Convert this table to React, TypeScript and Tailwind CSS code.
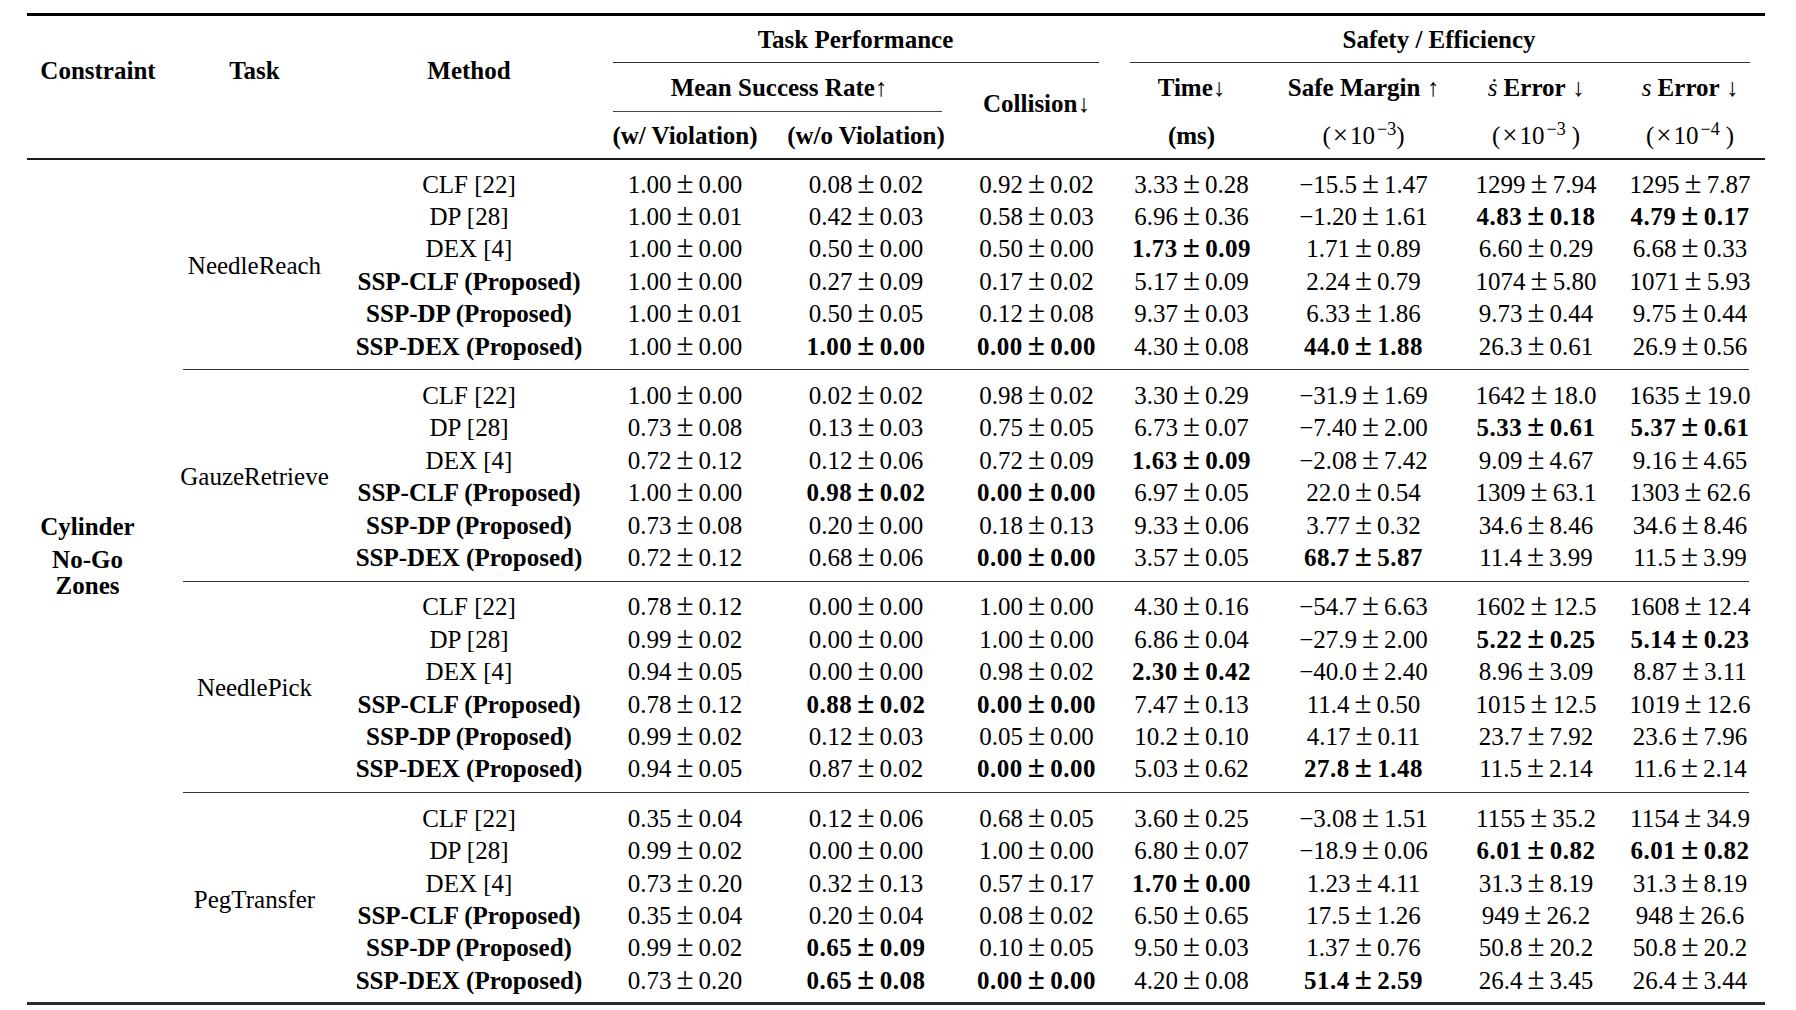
import { Fragment } from 'react';

type Row = { method: string; proposed?: boolean; vals: string[] };
type Group = { task: string; rows: Row[] };

// values prefixed with * are bold (best in column)
const groups: Group[] = [
  {
    task: 'NeedleReach',
    rows: [
      { method: 'CLF [22]', vals: ['1.00±0.00', '0.08±0.02', '0.92±0.02', '3.33±0.28', '−15.5±1.47', '1299±7.94', '1295±7.87'] },
      { method: 'DP [28]', vals: ['1.00±0.01', '0.42±0.03', '0.58±0.03', '6.96±0.36', '−1.20±1.61', '*4.83±0.18', '*4.79±0.17'] },
      { method: 'DEX [4]', vals: ['1.00±0.00', '0.50±0.00', '0.50±0.00', '*1.73±0.09', '1.71±0.89', '6.60±0.29', '6.68±0.33'] },
      { method: 'SSP-CLF (Proposed)', proposed: true, vals: ['1.00±0.00', '0.27±0.09', '0.17±0.02', '5.17±0.09', '2.24±0.79', '1074±5.80', '1071±5.93'] },
      { method: 'SSP-DP (Proposed)', proposed: true, vals: ['1.00±0.01', '0.50±0.05', '0.12±0.08', '9.37±0.03', '6.33±1.86', '9.73±0.44', '9.75±0.44'] },
      { method: 'SSP-DEX (Proposed)', proposed: true, vals: ['1.00±0.00', '*1.00±0.00', '*0.00±0.00', '4.30±0.08', '*44.0±1.88', '26.3±0.61', '26.9±0.56'] },
    ],
  },
  {
    task: 'GauzeRetrieve',
    rows: [
      { method: 'CLF [22]', vals: ['1.00±0.00', '0.02±0.02', '0.98±0.02', '3.30±0.29', '−31.9±1.69', '1642±18.0', '1635±19.0'] },
      { method: 'DP [28]', vals: ['0.73±0.08', '0.13±0.03', '0.75±0.05', '6.73±0.07', '−7.40±2.00', '*5.33±0.61', '*5.37±0.61'] },
      { method: 'DEX [4]', vals: ['0.72±0.12', '0.12±0.06', '0.72±0.09', '*1.63±0.09', '−2.08±7.42', '9.09±4.67', '9.16±4.65'] },
      { method: 'SSP-CLF (Proposed)', proposed: true, vals: ['1.00±0.00', '*0.98±0.02', '*0.00±0.00', '6.97±0.05', '22.0±0.54', '1309±63.1', '1303±62.6'] },
      { method: 'SSP-DP (Proposed)', proposed: true, vals: ['0.73±0.08', '0.20±0.00', '0.18±0.13', '9.33±0.06', '3.77±0.32', '34.6±8.46', '34.6±8.46'] },
      { method: 'SSP-DEX (Proposed)', proposed: true, vals: ['0.72±0.12', '0.68±0.06', '*0.00±0.00', '3.57±0.05', '*68.7±5.87', '11.4±3.99', '11.5±3.99'] },
    ],
  },
  {
    task: 'NeedlePick',
    rows: [
      { method: 'CLF [22]', vals: ['0.78±0.12', '0.00±0.00', '1.00±0.00', '4.30±0.16', '−54.7±6.63', '1602±12.5', '1608±12.4'] },
      { method: 'DP [28]', vals: ['0.99±0.02', '0.00±0.00', '1.00±0.00', '6.86±0.04', '−27.9±2.00', '*5.22±0.25', '*5.14±0.23'] },
      { method: 'DEX [4]', vals: ['0.94±0.05', '0.00±0.00', '0.98±0.02', '*2.30±0.42', '−40.0±2.40', '8.96±3.09', '8.87±3.11'] },
      { method: 'SSP-CLF (Proposed)', proposed: true, vals: ['0.78±0.12', '*0.88±0.02', '*0.00±0.00', '7.47±0.13', '11.4±0.50', '1015±12.5', '1019±12.6'] },
      { method: 'SSP-DP (Proposed)', proposed: true, vals: ['0.99±0.02', '0.12±0.03', '0.05±0.00', '10.2±0.10', '4.17±0.11', '23.7±7.92', '23.6±7.96'] },
      { method: 'SSP-DEX (Proposed)', proposed: true, vals: ['0.94±0.05', '0.87±0.02', '*0.00±0.00', '5.03±0.62', '*27.8±1.48', '11.5±2.14', '11.6±2.14'] },
    ],
  },
  {
    task: 'PegTransfer',
    rows: [
      { method: 'CLF [22]', vals: ['0.35±0.04', '0.12±0.06', '0.68±0.05', '3.60±0.25', '−3.08±1.51', '1155±35.2', '1154±34.9'] },
      { method: 'DP [28]', vals: ['0.99±0.02', '0.00±0.00', '1.00±0.00', '6.80±0.07', '−18.9±0.06', '*6.01±0.82', '*6.01±0.82'] },
      { method: 'DEX [4]', vals: ['0.73±0.20', '0.32±0.13', '0.57±0.17', '*1.70±0.00', '1.23±4.11', '31.3±8.19', '31.3±8.19'] },
      { method: 'SSP-CLF (Proposed)', proposed: true, vals: ['0.35±0.04', '0.20±0.04', '0.08±0.02', '6.50±0.65', '17.5±1.26', '949±26.2', '948±26.6'] },
      { method: 'SSP-DP (Proposed)', proposed: true, vals: ['0.99±0.02', '*0.65±0.09', '0.10±0.05', '9.50±0.03', '1.37±0.76', '50.8±20.2', '50.8±20.2'] },
      { method: 'SSP-DEX (Proposed)', proposed: true, vals: ['0.73±0.20', '*0.65±0.08', '*0.00±0.00', '4.20±0.08', '*51.4±2.59', '26.4±3.45', '26.4±3.44'] },
    ],
  },
];

function Num({ v }: { v: string }) {
  const bold = v.startsWith('*');
  const [a, b] = (bold ? v.slice(1) : v).split('±');
  return (
    <span className={bold ? 'font-bold tracking-[0.5px]' : ''}>
      {a}
      <span className="mx-[5px] text-[31px] leading-[0]">±</span>
      {b}
    </span>
  );
}

function Scale({ exp, gap }: { exp: string; gap?: boolean }) {
  return (
    <span>
      (<span className="mx-[2px] text-[27px] leading-[0]">×</span>10
      <span className="relative -top-[9px] ml-[2px] text-[18px]">{exp}</span>
      {gap ? <span className="ml-[6px]">)</span> : ')'}
    </span>
  );
}

export default function App() {
  return (
    <div className="min-h-screen bg-white pt-[13px] pl-[27px] font-['Liberation_Serif',serif] text-[25px] leading-none text-black">
      <table className="table-fixed border-collapse w-[1738px] whitespace-nowrap">
        <colgroup>
          <col className="w-[142px]" />
          <col className="w-[171px]" />
          <col className="w-[258px]" />
          <col className="w-[174px]" />
          <col className="w-[188px]" />
          <col className="w-[153px]" />
          <col className="w-[157px]" />
          <col className="w-[187px]" />
          <col className="w-[158px]" />
          <col className="w-[150px]" />
        </colgroup>
        <tbody>
          <tr>
            <td colSpan={10} className="p-0 h-[3px] bg-black" />
          </tr>

          <tr>
            <td rowSpan={3} className="p-0 align-top text-center font-bold">
              <div className="pt-[40px] leading-[30px]">Constraint</div>
            </td>
            <td rowSpan={3} className="p-0 align-top text-center font-bold">
              <div className="pt-[40px] leading-[30px]">Task</div>
            </td>
            <td rowSpan={3} className="p-0 align-top text-center font-bold">
              <div className="pt-[40px] leading-[30px]">Method</div>
            </td>
            <td colSpan={3} className="p-0 h-[47px]">
              <div className="flex h-[47px] flex-col">
                <div className="flex flex-1 items-center justify-center font-bold">Task Performance</div>
                <div className="ml-[15px] mr-[14px] h-px bg-[#333]" />
              </div>
            </td>
            <td colSpan={4} className="p-0 h-[47px]">
              <div className="flex h-[47px] flex-col">
                <div className="flex flex-1 items-center justify-center font-bold">Safety / Efficiency</div>
                <div className="ml-[17px] mr-[15px] h-px bg-[#333]" />
              </div>
            </td>
          </tr>

          <tr>
            <td colSpan={2} className="p-0 h-[49px]">
              <div className="flex h-[49px] flex-col">
                <div className="flex flex-1 items-center justify-center font-bold">Mean Success Rate↑</div>
                <div className="ml-[15px] mr-[18px] h-px bg-[#444]" />
              </div>
            </td>
            <td rowSpan={2} className="p-0 align-middle text-center font-bold">
              <div className="pb-[14px]">
                Collision<span className="font-normal">↓</span>
              </div>
            </td>
            <td className="p-0 text-center font-bold">
              Time<span className="font-normal">↓</span>
            </td>
            <td className="p-0 text-center font-bold">
              Safe Margin <span className="font-normal">↑</span>
            </td>
            <td className="p-0 text-center">
              <span className="italic">ṡ</span> <span className="font-bold">Error</span> ↓
            </td>
            <td className="p-0 text-center">
              <span className="italic">s</span> <span className="font-bold">Error</span> ↓
            </td>
          </tr>

          <tr>
            <td className="p-0 h-[46px] text-center font-bold">(w/ Violation)</td>
            <td className="p-0 text-center font-bold">(w/o Violation)</td>
            <td className="p-0 text-center font-bold">(ms)</td>
            <td className="p-0 text-center">
              <Scale exp="−3" />
            </td>
            <td className="p-0 text-center">
              <Scale exp="−3" gap />
            </td>
            <td className="p-0 text-center">
              <Scale exp="−4" gap />
            </td>
          </tr>

          <tr>
            <td colSpan={10} className="p-0 h-[2px] bg-[#1a1a1a]" />
          </tr>
          <tr>
            <td colSpan={10} className="p-0 h-[8px]" />
          </tr>

          {groups.map((g, gi) => (
            <Fragment key={g.task}>
              {g.rows.map((r, ri) => (
                <tr key={r.method}>
                  {gi === 0 && ri === 0 && (
                    <td rowSpan={27} className="p-0 align-middle font-bold">
                      <div className="flex flex-col items-center pr-[21px] pb-[52px]">
                        <div className="h-[30px] leading-[30px]">Cylinder</div>
                        <div className="mt-[3px] h-[30px] leading-[30px]">No-Go</div>
                        <div className="-mt-[4px] h-[30px] leading-[30px]">Zones</div>
                      </div>
                    </td>
                  )}
                  {ri === 0 && (
                    <td rowSpan={6} className="p-0 align-middle text-center">
                      {g.task}
                    </td>
                  )}
                  <td className={`p-0 h-[32.4px] text-center ${r.proposed ? 'font-bold' : ''}`}>{r.method}</td>
                  {r.vals.map((v, vi) => (
                    <td key={vi} className="p-0 text-center">
                      <Num v={v} />
                    </td>
                  ))}
                </tr>
              ))}
              {gi < groups.length - 1 && (
                <tr>
                  <td colSpan={9} className="p-0 h-[17px] align-top">
                    <div className="mt-[7px] ml-[14px] mr-[16px] h-px bg-[#333]" />
                  </td>
                </tr>
              )}
            </Fragment>
          ))}

          <tr>
            <td colSpan={10} className="p-0 h-[6px]" />
          </tr>
          <tr>
            <td colSpan={10} className="p-0 h-[3px] bg-[#2a2a2a]" />
          </tr>
        </tbody>
      </table>
    </div>
  );
}
